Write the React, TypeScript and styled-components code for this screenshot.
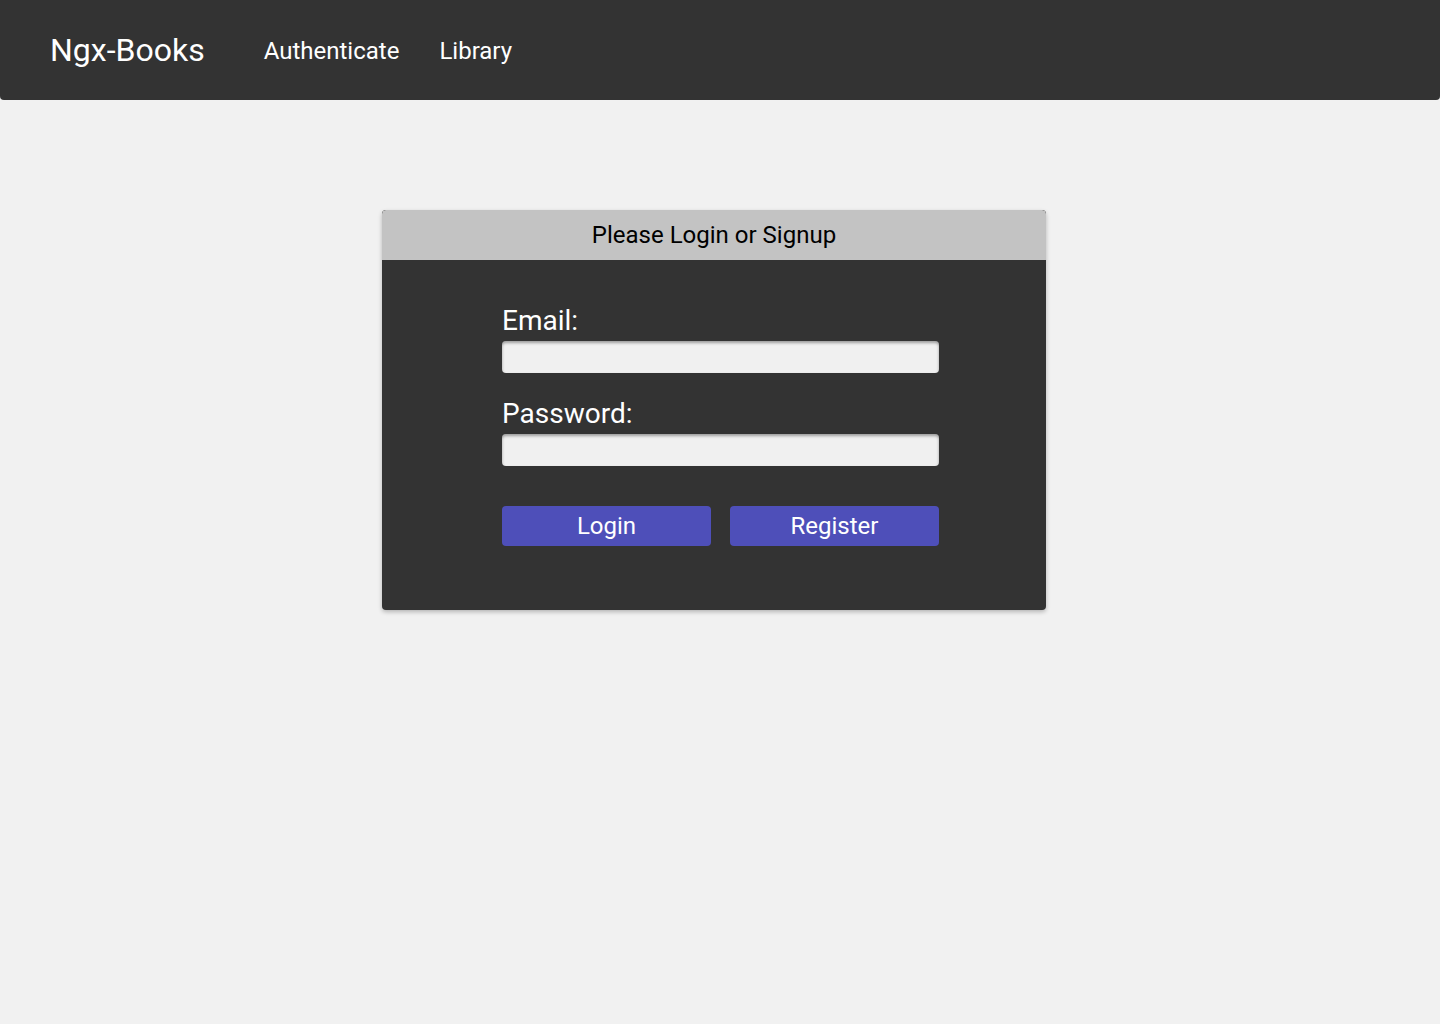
import React from "react";
import styled, { createGlobalStyle } from "styled-components";

const Global = createGlobalStyle`
  html, body { margin: 0; padding: 0; background: #f1f1f1; }
  body { font-family: Roboto, "Liberation Sans", sans-serif; }
  * { box-sizing: border-box; }
`;

const Page = styled.div`
  min-height: 1024px;
  background: #f1f1f1;
`;

const TopBar = styled.header`
  height: 100px;
  background: #333333;
  border-radius: 0 0 4px 4px;
  display: flex;
  align-items: center;
  padding-left: 50px;
  color: #fff;
`;

const Brand = styled.div`
  font-size: 32px;
  font-weight: 400;
  margin-right: 59px;
  margin-top: -1px;
`;

const NavLink = styled.a`
  font-size: 24px;
  color: #fff;
  text-decoration: none;
  margin-right: 40px;
  margin-top: 1px;
`;

const Main = styled.main`
  display: flex;
  justify-content: center;
  padding-top: 110px;
  padding-right: 12px;
`;

const Card = styled.section`
  width: 664px;
  height: 400px;
  background: #333333;
  border-radius: 4px;
  box-shadow: 0 2px 4px rgba(0, 0, 0, 0.25);
  overflow: hidden;
`;

const CardHeader = styled.div`
  height: 50px;
  background: #c3c3c3;
  color: #000;
  font-size: 24px;
  display: flex;
  align-items: center;
  justify-content: center;
  border-radius: 4px 4px 0 0;
`;

const Form = styled.form`
  width: 437px;
  margin-left: 120px;
  padding-top: 42px;
  display: flex;
  flex-direction: column;
`;

const Label = styled.label`
  color: #fff;
  font-size: 28px;
  line-height: 38px;
  margin-bottom: 1px;
`;

const Input = styled.input<{ $mb?: number }>`
  height: 32px;
  width: 100%;
  border: none;
  border-radius: 4px;
  background: #f0f0f0;
  box-shadow: inset 0 2px 3px rgba(0, 0, 0, 0.35);
  margin-bottom: ${(p) => p.$mb ?? 0}px;
  outline: none;
`;

const Buttons = styled.div`
  display: grid;
  grid-template-columns: 1fr 1fr;
  gap: 19px;
  margin-top: 40px;
`;

const Button = styled.button`
  height: 40px;
  border: none;
  border-radius: 4px;
  background: #4e4fb9;
  color: #fff;
  font-family: Roboto, "Liberation Sans", sans-serif;
  font-size: 24px;
  cursor: pointer;
`;

export default function App() {
  return (
    <Page>
      <Global />
      <TopBar>
        <Brand>Ngx-Books</Brand>
        <NavLink href="#">Authenticate</NavLink>
        <NavLink href="#">Library</NavLink>
      </TopBar>
      <Main>
        <Card>
          <CardHeader>Please Login or Signup</CardHeader>
          <Form onSubmit={(e) => e.preventDefault()}>
            <Label>Email:</Label>
            <Input type="email" $mb={22} />
            <Label>Password:</Label>
            <Input type="password" />
            <Buttons>
              <Button type="button">Login</Button>
              <Button type="button">Register</Button>
            </Buttons>
          </Form>
        </Card>
      </Main>
    </Page>
  );
}
